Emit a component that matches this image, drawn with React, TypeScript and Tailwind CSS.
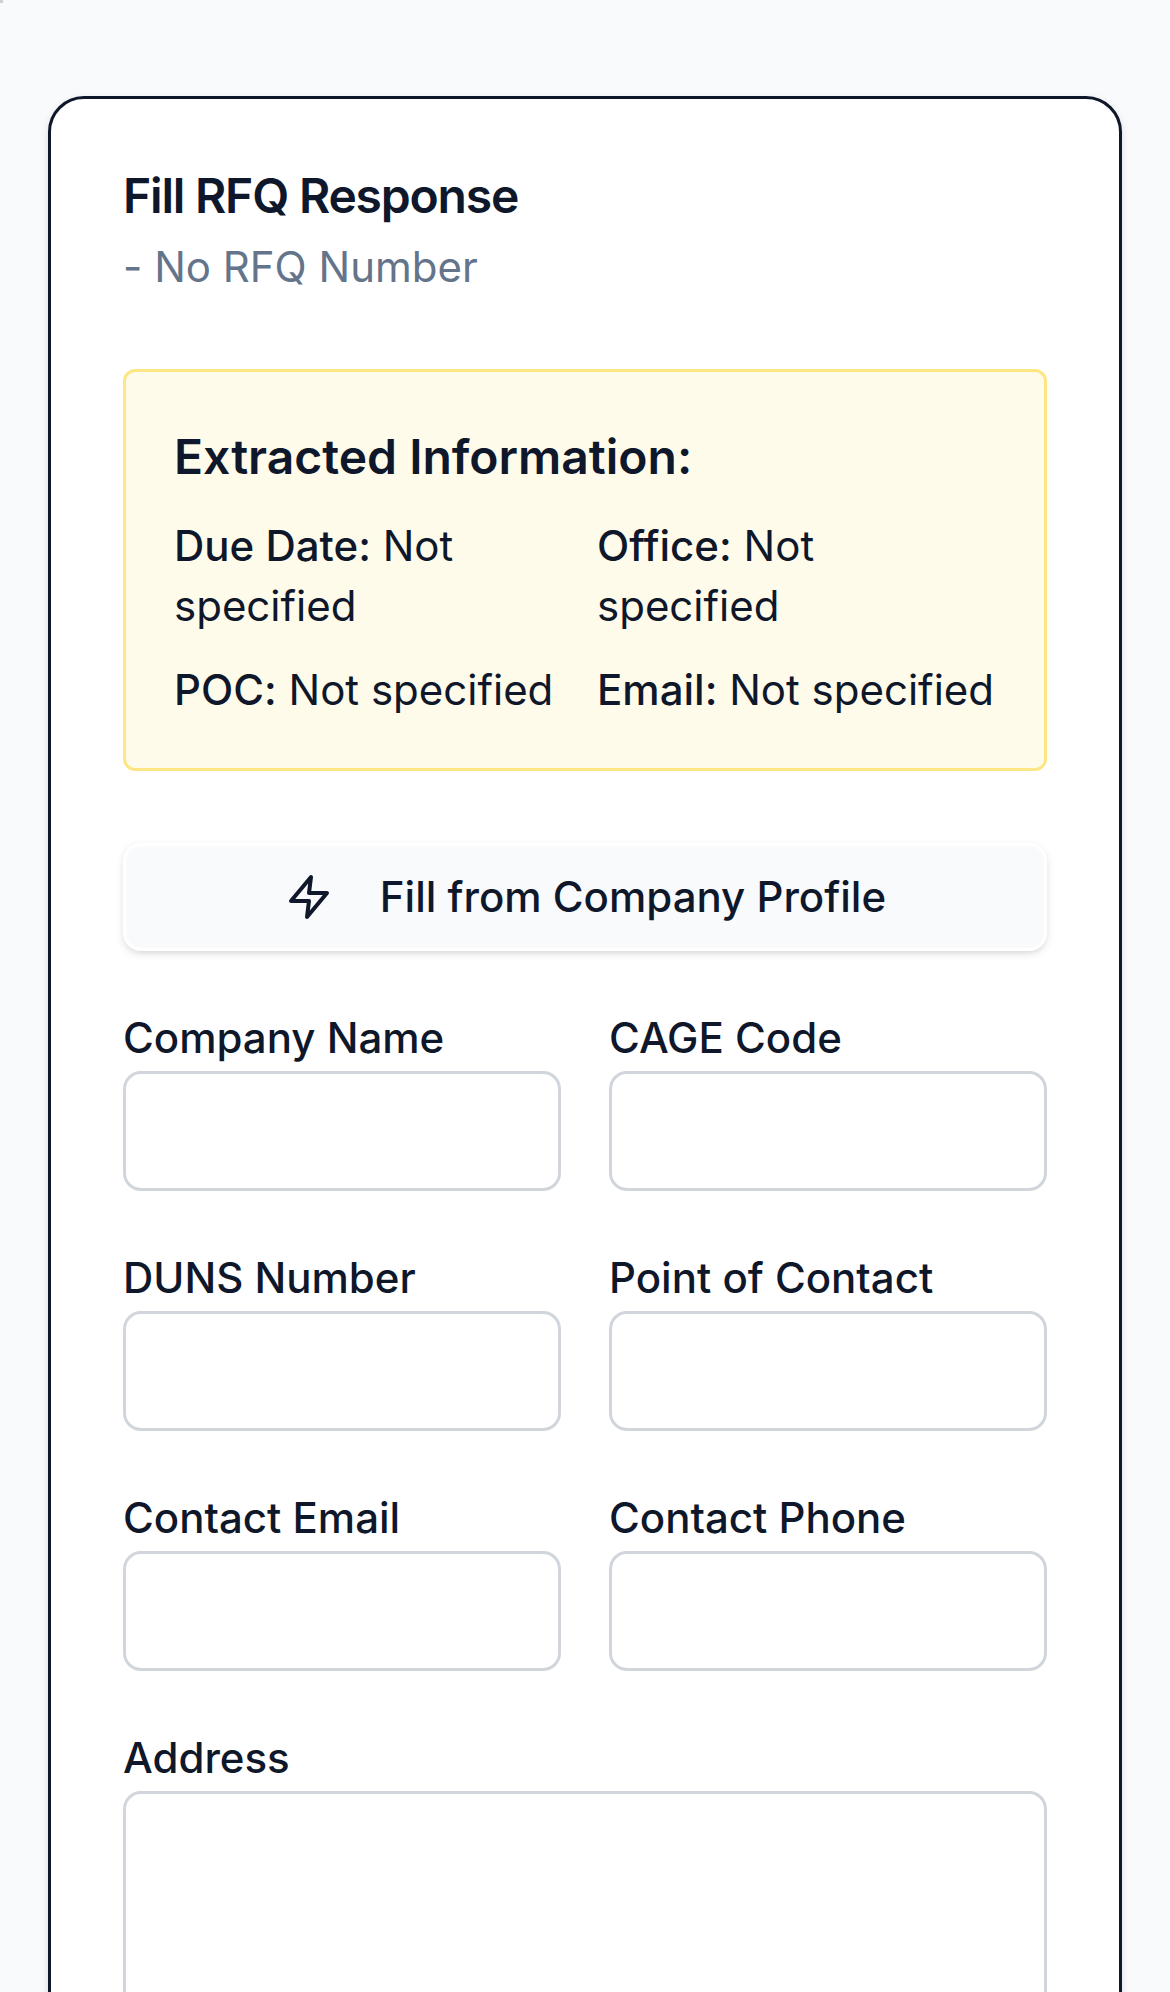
import React from "react";

const details = [
  { label: "Due Date:", value: "Not specified" },
  { label: "Office:", value: "Not specified" },
  { label: "POC:", value: "Not specified" },
  { label: "Email:", value: "Not specified" },
];

const fields = [
  "Company Name",
  "CAGE Code",
  "DUNS Number",
  "Point of Contact",
  "Contact Email",
  "Contact Phone",
];

function BoltIcon() {
  return (
    <svg
      className="ml-px size-12 shrink-0"
      viewBox="0 0 24 24"
      fill="none"
      stroke="currentColor"
      strokeWidth="2"
      strokeLinecap="round"
      strokeLinejoin="round"
    >
      <polygon points="13 2 3 14 12 14 11 22 21 10 12 10 13 2" />
    </svg>
  );
}

function FieldLabel({ id, children }: { id: string; children: React.ReactNode }) {
  return (
    <div className="h-[72px] text-[48px] leading-[74px]">
      <label htmlFor={id} className="text-[42px] font-medium">
        {children}
      </label>
    </div>
  );
}

function TextField({ label }: { label: string }) {
  const id = label.toLowerCase().replaceAll(" ", "-");
  return (
    <div>
      <FieldLabel id={id}>{label}</FieldLabel>
      <input
        id={id}
        className="block h-[120px] w-full rounded-[18px] border-[3px] border-gray-300 bg-white px-9 text-[42px] outline-none"
      />
    </div>
  );
}

export default function App() {
  return (
    <div className="relative h-[1992px] overflow-hidden bg-[#f8fafc] px-12 pt-24 font-['Inter',sans-serif] text-[#0f172a] antialiased [font-feature-settings:'calt'_0]">
      <span className="absolute top-0 left-0 size-[3px] bg-[#d0d1d3]" />
      <main className="h-[2400px] rounded-[36px] border-[3px] border-[#0f172a] bg-white p-[72px] shadow-[0_3px_9px_0_rgb(0_0_0/0.1),0_3px_6px_-3px_rgb(0_0_0/0.1)]">
        <header className="flex flex-col gap-4 pb-[72px]">
          <h1 className="text-[48px] leading-[50px] font-semibold tracking-tight">Fill RFQ Response</h1>
          <p className="text-[42px] leading-[60px] text-[#64748b]">- No RFQ Number</p>
        </header>

        <section className="rounded-xl border-[3px] border-[#fee685] bg-[#fffbeb] p-12">
          <h2 className="mb-[22px] text-[48px] leading-[74px] font-semibold">Extracted Information:</h2>
          <div className="grid grid-cols-2 gap-6 text-[42px] leading-[60px]">
            {details.map((item) => (
              <div key={item.label}>
                <span className="font-medium">{item.label}</span> {item.value}
              </div>
            ))}
          </div>
        </section>

        <button className="mt-[72px] flex h-[108px] w-full items-center justify-center gap-[47px] rounded-[18px] border-[3px] border-white bg-[#f8fafc] text-[42px] leading-[60px] font-medium shadow-[0_3px_9px_0_rgb(0_0_0/0.1),0_3px_6px_-3px_rgb(0_0_0/0.1)]">
          <BoltIcon />
          Fill from Company Profile
        </button>

        <form className="mt-12">
          <div className="grid grid-cols-2 gap-12">
            {fields.map((label) => (
              <TextField key={label} label={label} />
            ))}
          </div>
          <div className="mt-12">
            <FieldLabel id="address">Address</FieldLabel>
            <textarea
              id="address"
              className="block h-[300px] w-full resize-none rounded-[18px] border-[3px] border-gray-300 bg-white px-9 py-6 text-[42px] outline-none"
            />
          </div>
        </form>
      </main>
    </div>
  );
}
